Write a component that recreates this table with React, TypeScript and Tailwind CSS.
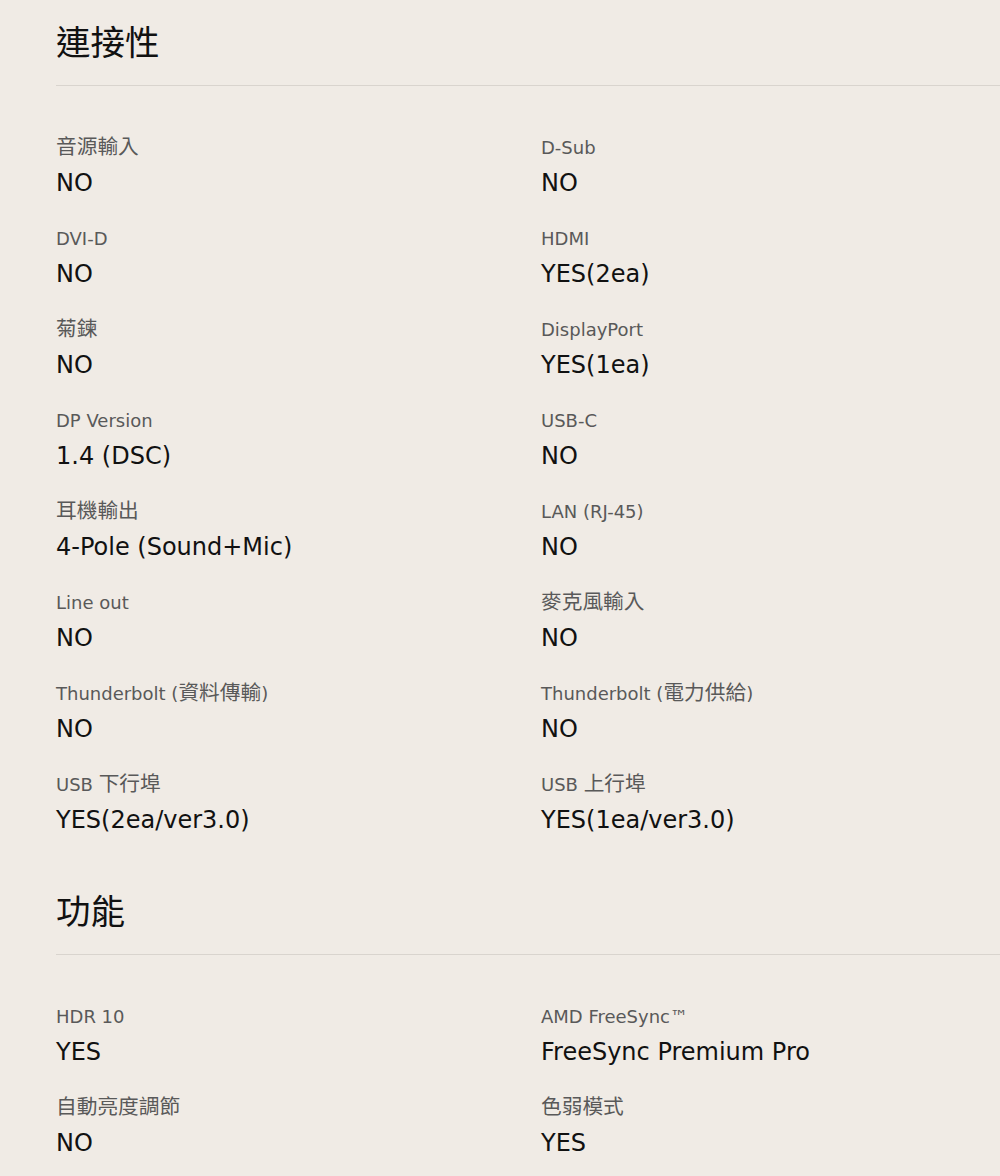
import React from 'react';

interface Spec {
  label: string;
  value: string;
}

const connectivity: Spec[] = [
  { label: '音源輸入', value: 'NO' },
  { label: 'D-Sub', value: 'NO' },
  { label: 'DVI-D', value: 'NO' },
  { label: 'HDMI', value: 'YES(2ea)' },
  { label: '菊鍊', value: 'NO' },
  { label: 'DisplayPort', value: 'YES(1ea)' },
  { label: 'DP Version', value: '1.4 (DSC)' },
  { label: 'USB-C', value: 'NO' },
  { label: '耳機輸出', value: '4-Pole (Sound+Mic)' },
  { label: 'LAN (RJ-45)', value: 'NO' },
  { label: 'Line out', value: 'NO' },
  { label: '麥克風輸入', value: 'NO' },
  { label: 'Thunderbolt (資料傳輸)', value: 'NO' },
  { label: 'Thunderbolt (電力供給)', value: 'NO' },
  { label: 'USB 下行埠', value: 'YES(2ea/ver3.0)' },
  { label: 'USB 上行埠', value: 'YES(1ea/ver3.0)' },
];

const features: Spec[] = [
  { label: 'HDR 10', value: 'YES' },
  { label: 'AMD FreeSync™', value: 'FreeSync Premium Pro' },
  { label: '自動亮度調節', value: 'NO' },
  { label: '色弱模式', value: 'YES' },
];

// CJK glyphs render a bit larger than the latin ones in the original font stack
const Mixed: React.FC<{ text: string }> = ({ text }) => (
  <>
    {text.split(/([\u3000-\u9fff]+)/).map((part, i) =>
      /[\u3000-\u9fff]/.test(part) ? (
        <span key={i} className="text-[1.15em] leading-none font-['Noto_Sans_CJK_TC']">
          {part}
        </span>
      ) : (
        part
      )
    )}
  </>
);

const Section: React.FC<{ title: string; specs: Spec[]; className?: string }> = ({ title, specs, className }) => (
  <section className={className}>
    <h2 className="text-[34.5px] leading-[48px] text-[#111] font-['Noto_Sans_CJK_TC']">{title}</h2>
    <div className="mt-[21px] h-px bg-[#d9d4ce]" />
    <dl className="mt-[49px] grid grid-cols-[485px_1fr] gap-y-[26px]">
      {specs.map((s, i) => (
        <div key={i} className="flex flex-col gap-[5px]">
          <dt className="text-[18px] leading-[26px] text-[#595959]">
            <Mixed text={s.label} />
          </dt>
          <dd className="text-[24px] leading-[34px] text-[#111]">{s.value}</dd>
        </div>
      ))}
    </dl>
  </section>
);

export default function App() {
  return (
    <div
      className="min-h-[1176px] bg-[#f0ebe5] pl-[56px] pt-[16px]"
      style={{ fontFamily: '"DejaVu Sans", "Noto Sans CJK TC", sans-serif' }}
    >
      <Section title="連接性" specs={connectivity} />
      <Section title="功能" specs={features} className="mt-[48px]" />
    </div>
  );
}
